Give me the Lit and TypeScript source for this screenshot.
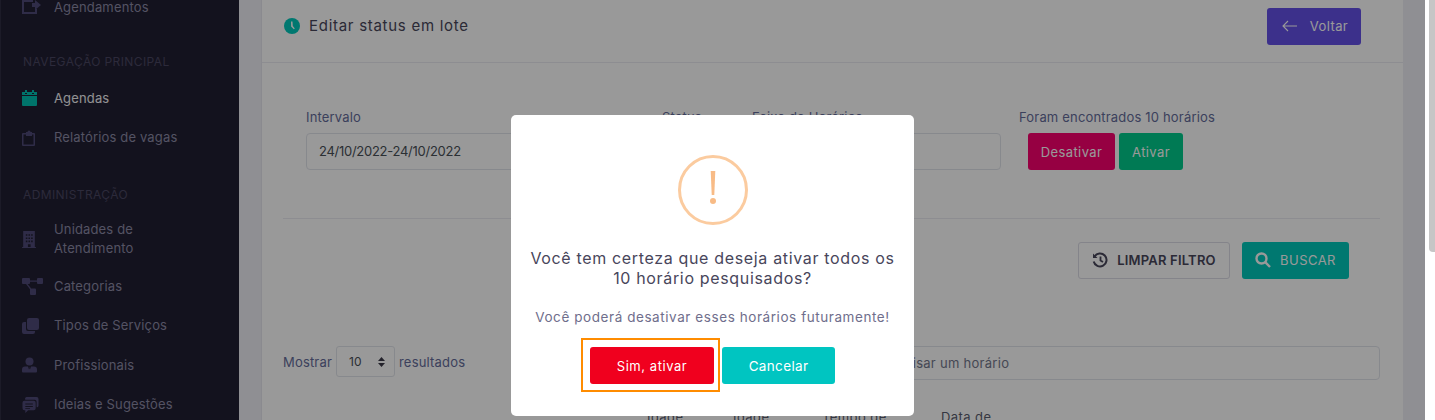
import { LitElement, html, css, svg } from "lit";
import { customElement } from "lit/decorators.js";

const icons: Record<string, any> = {
  share: svg`<path d="M0 0h11v2H2v10h11V9h2v5H0zM10 3h3V0l6 5-6 5V7h-3z"/>`,
  calendar: svg`<path d="M3 0h2v3H3zM10 0h2v3h-2zM0 2h3v2h2V2h5v2h2V2h3v3H0zM0 6h15v9a1 1 0 0 1-1 1H1a1 1 0 0 1-1-1z"/>`,
  clipboard: svg`<path fill-rule="evenodd" d="M4 2h1.5a1.5 1.5 0 0 1 3 0H10v1h2a1 1 0 0 1 1 1v11a1 1 0 0 1-1 1H1a1 1 0 0 1-1-1V4a1 1 0 0 1 1-1h3zM1.5 4.5v10h10v-10H10V6H4V4.500z"/>`,
  building: svg`<path fill-rule="evenodd" d="M1 0h11v15h1v1H0v-1h1zM3.500 3v1.500H5V3zM6 3v1.500h1.500V3zM8.500 3v1.500H10V3zM3.500 6v1.500H5V6zM6 6v1.500h1.500V6zM8.500 6v1.500H10V6zM3.500 9v1.500H5V9zM6 9v1.500h1.500V9zM8.500 9v1.500H10V9zM5.500 12.500V15h2.500v-2.500z"/>`,
  sitemap: svg`<path d="M0 1a1 1 0 0 1 1-1h6a1 1 0 0 1 1 1v1.500h7V1a1 1 0 0 1 1-1h4a1 1 0 0 1 1 1v4a1 1 0 0 1-1 1h-4a1 1 0 0 1-1-1V3.700H8V5a1 1 0 0 1-1 1H5.600l3.600 4.500H13a1 1 0 0 1 1 1V16a1 1 0 0 1-1 1H9a1 1 0 0 1-1-1v-4.700L4 6H1a1 1 0 0 1-1-1z"/>`,
  copy: svg`<path d="M5 2a2 2 0 0 1 2-2h8a2 2 0 0 1 2 2v8a2 2 0 0 1-2 2H7a2 2 0 0 1-2-2zM0 6a2 2 0 0 1 2-2h2v7a2 2 0 0 0 2 2h7v1a2 2 0 0 1-2 2H2a2 2 0 0 1-2-2z"/>`,
  user: svg`<circle cx="7.500" cy="4" r="4"/><path d="M3 9h3l1 3 .5-1.500L7 10h1l-.5.5L8 12l1-3h3a3 3 0 0 1 3 3v2a1 1 0 0 1-1 1H1a1 1 0 0 1-1-1v-2a3 3 0 0 1 3-3z"/>`,
  comments: svg`<path d="M5 0h10a2 2 0 0 1 2 2v7a2 2 0 0 1-2 2V5a2 2 0 0 0-2-2H3a2 2 0 0 1 2-3z"/><path fill-rule="evenodd" d="M2 4h10a2 2 0 0 1 2 2v6a2 2 0 0 1-2 2H6l-3 3v-3H2a2 2 0 0 1-2-2V6a2 2 0 0 1 2-2zM3 7v1h8V7zM3 9.500v1h8v-1zM3 12v.8h5V12z"/>`,
};

const icon = (name: string, w: number, h: number, vw: number, vh: number) =>
  html`<svg class="nav-icon" width=${w} height=${h} viewBox="0 0 ${vw} ${vh}" fill="currentColor">${icons[name]}</svg>`;

@customElement("app-root")
export class AppRoot extends LitElement {
  static styles = css`
    :host {
      display: block;
      position: relative;
      width: 1435px;
      height: 420px;
      overflow: hidden;
      font-family: Inter, "Liberation Sans", sans-serif;
      background: #fff;
    }
    * { box-sizing: border-box; }
    .page { display: flex; height: 420px; width: 1425px; overflow: hidden; background: #eeeef5; }

    .sidebar { width: 239px; flex: none; background: #211f32; border-left: 1px solid #2f2d44; color: #8c8aa6; font-size: 13px; letter-spacing: .15px; }
    .nav { margin-top: -12px; }
    .item { display: flex; align-items: center; min-height: 39.5px; padding: 7.5px 10px 7.5px 21px; line-height: 19px; }
    .item .slot { flex: none; width: 32px; display: flex; align-items: center; }
    .item.two { padding-bottom: 8.5px; }
    .nav-icon { display: block; color: #4f4a78; }
    .item.active { color: #f2f2f6; }
    .item.active .nav-icon { color: #00c2b2; }
    .section { color: #4a4763; font-size: 12px; line-height: 20px; padding-left: 22px; letter-spacing: .4px; }
    .s1 { padding-top: 24px; padding-bottom: 7px; }
    .s2 { padding-top: 27px; padding-bottom: 8px; }

    .main { flex: 1; min-width: 0; padding: 0 22px; }
    .card { background: #fff; border-left: 1px solid #e6e6ee; height: 420px; }
    .head { display: flex; align-items: center; justify-content: space-between; height: 63px; padding: 8px 42px 17px 22px; border-bottom: 1px solid #ebebf2; }
    .title { display: flex; align-items: center; gap: 9px; font-size: 15px; font-weight: 400; color: #48465b; letter-spacing: .72px; margin-bottom: 2px; }
    .btn { display: inline-flex; align-items: center; justify-content: center; height: 37px; border-radius: 3px; color: #fff; font-size: 13px; letter-spacing: .4px; border: none; font-family: inherit; }
    .voltar { width: 94px; background: #6451e8; gap: 13px; padding: 0 0 2px 2px; }

    .form { display: flex; padding: 44px 0 0 44px; }
    .col { display: flex; flex-direction: column; }
    .lbl { font-size: 13px; line-height: 20px; margin-bottom: 6px; color: #646c9a; letter-spacing: .18px; white-space: nowrap; }
    .input { height: 37px; border: 1px solid #e2e5ec; border-radius: 4px; padding: 0 12px 1px; display: flex; align-items: center; font-size: 13px; color: #495057; letter-spacing: -.27px; background: #fff; }
    .c1 { width: 341px; margin-right: 15px; }
    .c2 { width: 75px; margin-right: 15px; }
    .c3 { width: 249px; margin-right: 18px; }
    .found { display: flex; gap: 4px; padding-left: 9px; }
    .des { width: 87px; background: #fa006e; }
    .ati { width: 64px; background: #00cc8c; }

    .rule { height: 1px; background: #ebebf2; margin: 48px 23px 0 21px; }
    .filters { display: flex; justify-content: flex-end; gap: 12px; margin: 23px 54px 0 0; }
    .limpar { width: 152px; background: #fff; border: 1px solid #dcdce6; color: #48465b; font-weight: 600; font-size: 13px; gap: 9px; letter-spacing: .2px; padding-bottom: 1px; }
    .buscar { width: 107px; background: #00c9bb; gap: 9px; font-weight: 400; letter-spacing: .45px; padding-bottom: 2px; }

    .tools { display: flex; justify-content: space-between; align-items: flex-start; margin: 67px 23px 0 21px; }
    .show { display: flex; align-items: center; gap: 4px; font-size: 13px; color: #646c9a; letter-spacing: .18px; height: 31px; }
    .sel { width: 59px; height: 31px; border: 1px solid #e2e5ec; border-radius: 3px; display: flex; align-items: center; justify-content: space-between; padding: 0 9px 0 12px; color: #495057; font-size: 12px; letter-spacing: 0; }
    .search { width: 522px; height: 34px; font-size: 13px; color: #74788d; padding-left: 14px; letter-spacing: .28px; }

    .thead { display: flex; margin: 28px 0 0 385px; font-size: 13px; font-weight: 400; color: #595d6e; letter-spacing: .42px; line-height: 19px; }
    .thead span:nth-child(1) { width: 86px; }
    .thead span:nth-child(2) { width: 89px; }
    .thead span:nth-child(3) { width: 119px; }

    .bar { position: absolute; top: 0; right: 0; bottom: 0; width: 10px; background: #fff; }
    .thumb { position: absolute; top: 0; right: 0; width: 6px; height: 252px; background: #c6c6c6; border-radius: 0 0 0 4px; }

    .overlay { position: absolute; inset: 0 10px 0 0; background: rgba(0,0,0,.4); }
    .modal { position: absolute; left: 511px; top: 115px; width: 403px; height: 301px; background: #fff; border-radius: 5px; padding-top: 40px; display: flex; flex-direction: column; align-items: center; }
    .warn { display: block; }
    .m-title { margin-top: 24px; text-align: center; font-size: 16px; font-weight: 400; line-height: 19.500px; color: #48465b; letter-spacing: .66px; width: 100%; }
    .m-sub { margin-top: 19px; font-size: 13.500px; line-height: 20px; color: #6f6e8c; letter-spacing: .57px; }
    .actions { align-self: stretch; display: flex; gap: 2px; margin-top: 11px; padding-left: 70px; }
    .focus { border: 2px solid #ff8c00; padding: 7px 4px 6px 7px; display: flex; }
    .sim { width: 124px; background: #f0001e; font-weight: 400; letter-spacing: .55px; }
    .cancel { width: 113px; background: #00c5c1; margin-top: 9px; font-size: 13.500px; font-weight: 400; letter-spacing: .35px; }
  `;

  render() {
    return html`
      <div class="page">
        <aside class="sidebar">
          <div class="nav">
            <div class="item"><span class="slot">${icon("share", 19, 16, 19, 16)}</span>Agendamentos</div>
            <div class="section s1">NAVEGAÇÃO PRINCIPAL</div>
            <div class="item active"><span class="slot">${icon("calendar", 15, 16, 15, 16)}</span>Agendas</div>
            <div class="item"><span class="slot">${icon("clipboard", 13, 16, 13, 16)}</span>Relatórios de vagas</div>
            <div class="section s2">ADMINISTRAÇÃO</div>
            <div class="item two"><span class="slot">${icon("building", 14, 17, 13, 16)}</span>Unidades de<br />Atendimento</div>
            <div class="item"><span class="slot">${icon("sitemap", 21, 17, 21, 17)}</span>Categorias</div>
            <div class="item"><span class="slot">${icon("copy", 17, 16, 17, 16)}</span>Tipos de Serviços</div>
            <div class="item"><span class="slot">${icon("user", 15, 16, 15, 15)}</span>Profissionais</div>
            <div class="item"><span class="slot">${icon("comments", 17, 16, 17, 17)}</span>Ideias e Sugestões</div>
          </div>
        </aside>
        <main class="main">
          <section class="card">
            <header class="head">
              <div class="title">
                <svg width="16" height="16" viewBox="0 0 16 16"><circle cx="8" cy="8" r="8" fill="#00c9bb"/><path d="M7 3.500h1.500l.3 4.500 2 2.500-1 .7-2.700-2.700z" fill="#fff"/></svg>
                Editar status em lote
              </div>
              <div class="btn voltar">
                <svg width="15" height="12" viewBox="0 0 15 12" fill="none" stroke="#fff" stroke-width="1.100"><path d="M15 6H1M6 1 1 6l5 5"/></svg>
                Voltar
              </div>
            </header>
            <div class="form">
              <div class="col c1"><div class="lbl">Intervalo</div><div class="input">24/10/2022-24/10/2022</div></div>
              <div class="col c2"><div class="lbl">Status</div><div class="input"></div></div>
              <div class="col c3"><div class="lbl">Faixa de Horários:</div><div class="input"></div></div>
              <div class="col">
                <div class="lbl">Foram encontrados 10 horários</div>
                <div class="found"><div class="btn des">Desativar</div><div class="btn ati">Ativar</div></div>
              </div>
            </div>
            <div class="rule"></div>
            <div class="filters">
              <div class="btn limpar">
                <svg width="16" height="16" viewBox="0 0 16 16" fill="none" stroke="#48465b" stroke-width="2"><path d="M2.500 4.500A6.500 6.500 0 1 1 1.700 9.500"/><path d="M8.500 4.500V8.500l2.500 1.500" stroke-width="1.800"/><path d="M1 1.500V6h4.500z" fill="#48465b" stroke="none"/></svg>
                LIMPAR FILTRO
              </div>
              <div class="btn buscar">
                <svg width="16" height="16" viewBox="0 0 16 16" fill="none" stroke="#fff" stroke-width="2.400"><circle cx="6.500" cy="6.500" r="5"/><path d="M10.200 10.200 15 15"/></svg>
                BUSCAR
              </div>
            </div>
            <div class="tools">
              <div class="show">
                Mostrar
                <div class="sel">10
                  <svg width="7" height="10" viewBox="0 0 7 10" fill="#3b3a48"><path d="M3.500 0 7 4H0zM3.500 10 0 6h7z"/></svg>
                </div>
                resultados
              </div>
              <div class="input search">Pesquisar um horário</div>
            </div>
            <div class="thead"><span>Idade</span><span>Idade</span><span>Tempo de</span><span>Data de</span></div>
          </section>
        </main>
      </div>
      <div class="bar"><div class="thumb"></div></div>
      <div class="overlay"></div>
      <div class="modal" role="dialog">
        <svg class="warn" width="70" height="70" viewBox="0 0 70 70">
          <circle cx="35" cy="35" r="33.500" fill="none" stroke="#fbcb9f" stroke-width="3"/>
          <path d="M32.700 16h4.600l-1 24h-2.600z" fill="#f8bb86"/>
          <circle cx="35" cy="46" r="3" fill="#f8bb86"/>
        </svg>
        <div class="m-title">Você tem certeza que deseja ativar todos os<br />10 horário pesquisados?</div>
        <div class="m-sub">Você poderá desativar esses horários futuramente!</div>
        <div class="actions">
          <div class="focus"><div class="btn sim">Sim, ativar</div></div>
          <div class="btn cancel">Cancelar</div>
        </div>
      </div>
    `;
  }
}
